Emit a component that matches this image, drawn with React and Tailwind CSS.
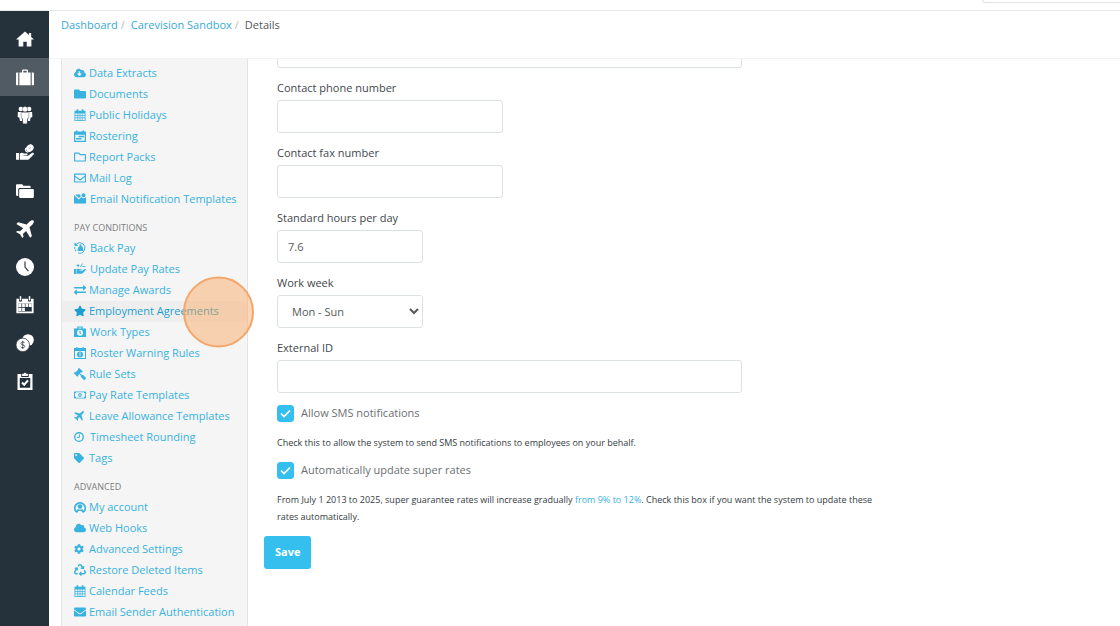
import React, { useState } from 'react';
import {
  FaCloudDownloadAlt, FaFolder, FaRegFolder, FaRegEnvelope,
  FaStar, FaGavel, FaTag, FaCloud, FaCog, FaRecycle, FaEnvelope,
  FaExchangeAlt, FaRegMoneyBillAlt,
} from 'react-icons/fa';

const svgProps = { viewBox: '0 0 24 24', fill: 'currentColor', 'aria-hidden': true };

const HomeIcon = (props) => (
  <svg {...svgProps} {...props}>
    <path d="M12 2L0 12.800h3.500V22h6.200v-6.500h4.600V22h6.200v-9.200H24l-3.800-3.500V4h-3v2.600z" />
  </svg>
);

const SuitcaseIcon = (props) => (
  <svg {...svgProps} {...props}>
    <path d="M0 7.500C0 6.600.6 6 1.500 6H3v17H1.500C.6 23 0 22.400 0 21.500zM21 6h1.500c.9 0 1.500.6 1.500 1.500v14c0 .9-.6 1.500-1.500 1.500H21z" />
    <path fillRule="evenodd" d="M4.500 6H8V3.200C8 2.500 8.500 2 9.200 2h5.600c.7 0 1.200.5 1.200 1.200V6h3.500v17h-15zM9.800 3.800V6h4.400V3.800z" />
  </svg>
);

const PlaneIcon = (props) => (
  <svg {...svgProps} {...props}>
    <path d="M23.300.7c1 1 .2 3.600-1 4.800L18 9.800l3.200 11.500-2.200 2.200-5.600-9-4.100 4.100.7 3.600L8.400 24l-3-4.900-5.400-3L1.700 14.500l3.700.6 4.200-4.200L.5 5.400 2.800 3.100 14.200 6l4.300-4.300C19.700.5 22.300-.3 23.300.7z" />
  </svg>
);

const PeopleIcon = (props) => (
  <svg {...svgProps} {...props}>
    <circle cx="6.500" cy="4" r="3" />
    <circle cx="17.500" cy="4" r="3" />
    <path d="M2.500 8H8v12H5.300L4.600 15.500 2.200 14.500z" />
    <path d="M21.500 8H16v12h2.700l.7-4.500 2.400-1z" />
    <g stroke="#25313b" strokeWidth=".5">
      <circle cx="12" cy="4.300" r="3.600" />
      <path d="M6.600 8.200h10.800l-.6 8-1.400.6-.6 7H9.200l-.6-7-1.400-.6z" />
    </g>
  </svg>
);

const HandCoinIcon = (props) => (
  <svg {...svgProps} {...props}>
    <path d="M0 12h4v9H0z" />
    <path d="M5 12.500c2-1.500 4.200-1.200 5.800.2h3.400c1.700 0 1.700 2.500 0 2.500H10v.9h5.500l5.600-4c1.800-1.100 3.700.7 2.200 2.300l-6 5.800c-.7.500-1.300.8-2.200.8H5z" />
    <ellipse cx="18.500" cy="5.500" rx="5.300" ry="4.400" transform="rotate(-40 18.500 5.500)" />
    <path d="M13 5.500c-1.500 2.500.5 5.500 3.500 5.300" fill="none" stroke="currentColor" strokeWidth="1.500" />
    <path d="M17.500 7l2-2.800" stroke="#25313b" strokeWidth=".5" />
  </svg>
);

const FoldersIcon = (props) => (
  <svg {...svgProps} {...props}>
    <path d="M0 4.500C0 3.700.6 3 1.500 3h6.300c.8 0 1.300.5 1.500 1.200L9.700 5H18c1 0 1.500.6 1.500 1.500V8H5C3.800 8 3 8.800 3 10v8.500H1.500C.6 18.500 0 18 0 17z" />
    <rect x="4.200" y="9.200" width="19.600" height="12" rx="1.600" />
  </svg>
);

const ClockIcon = (props) => (
  <svg {...svgProps} {...props}>
    <circle cx="12" cy="12" r="12" />
    <path d="M12 4.500V12l4.500 5.500" fill="none" stroke="#25313b" strokeWidth="1.500" />
  </svg>
);

const ScheduleIcon = (props) => (
  <svg {...svgProps} {...props}>
    <path fillRule="evenodd" d="M.5 3.500H4v2a2 2 0 0 0 4 0v-2h8v2a2 2 0 0 0 4 0v-2h3.500V23H.5zM3 10v10.500h18V10z" />
    <rect x="5" y="0" width="2" height="6" rx="1" />
    <rect x="17" y="0" width="2" height="6" rx="1" />
    <path d="M3 10h4.300v4.500H3zM8.200 10h3.600v4.500H8.200zM12.700 10h3.600v4.500h-3.600zM17.200 10H21v4.500h-3.800zM3 15.500h4.300V20H3zM8.200 15.500h3.600V20H8.200z" />
  </svg>
);

const CoinsIcon = (props) => (
  <svg {...svgProps} {...props}>
    <circle cx="16" cy="8" r="7.800" />
    <circle cx="9" cy="14.500" r="9" stroke="#25313b" strokeWidth="1" />
    <path d="M11.500 12c-.4-1-1.300-1.400-2.500-1.400-1.400 0-2.400.7-2.400 1.900 0 2.800 5 1.300 5 4 0 1.300-1.100 2-2.600 2-1.300 0-2.300-.5-2.700-1.600M9 9v11" fill="none" stroke="#25313b" strokeWidth="1" />
  </svg>
);

const ClipboardIcon = (props) => (
  <svg {...svgProps} {...props}>
    <path fillRule="evenodd" d="M2 2.500h5v4h10v-4h5V24H2zM5 8v13h14V8z" />
    <path d="M8.200 2.200h2.200a1.700 1.700 0 0 1 3.200 0h2.200v3H8.200z" />
    <path d="M8 14l3 3 5-5.800" fill="none" stroke="currentColor" strokeWidth="2.800" />
  </svg>
);

const CalendarIcon = (props) => (
  <svg {...svgProps} {...props}>
    <path fillRule="evenodd" d="M1 3.500h4V1.200C5 0 8.500 0 8.500 1.200v2.300h7V1.200c0-1.200 3.500-1.200 3.500 0v2.300h4V24H1zM2.700 9v3.200H7V9zm5.700 0v3.200h3V9zm4.300 0v3.200h3V9zM17 9v3.200h4.300V9zM2.700 13.600v3.400H7v-3.400zm5.700 0v3.400h3v-3.400zm4.300 0v3.400h3v-3.400zm4.300 0v3.400h4.300v-3.400zM2.700 18.500v3.800H7v-3.800zm5.700 0v3.800h3v-3.800zm4.300 0v3.800h3v-3.800zm4.300 0v3.800h4.300v-3.800z" />
  </svg>
);

const RosterIcon = (props) => (
  <svg {...svgProps} {...props}>
    <path fillRule="evenodd" d="M0 3h4V1h3v2h10V1h3v2h4v21H0zM2.500 9.500v12h19v-12z" />
    <path d="M9 11.500h11v2.800H9zM4 16h11v2.800H4z" />
  </svg>
);

const MailAlertIcon = (props) => (
  <svg {...svgProps} {...props}>
    <path d="M0 4l9.500 9 5.300-4.800C17 11 21 11 24 8.500V21H0z" />
    <path d="M2.500 3h10.300c-.2 1.500.1 2.700.8 3.700L9.500 10z" />
    <circle cx="19" cy="4.500" r="3.800" />
  </svg>
);

const BackPayIcon = (props) => (
  <svg {...svgProps} {...props}>
    <path d="M4.500 4A10.500 10.500 0 1 1 8 21.800" fill="none" stroke="currentColor" strokeWidth="2" />
    <path d="M1 .5V8h7.500zM0 10.500h2.500v3H0zM1 16l2.500-1 1.500 2.500L3 19z" />
    <path d="M10 5h5.500l-1.300 2.700c3.300 2 4.800 5.300 4.300 10.300h-11c-.5-5 1-8.300 4.300-10.300z" />
  </svg>
);

const UpdatePayIcon = (props) => (
  <svg {...svgProps} {...props}>
    <path d="M0 12h4.500v10H0zM5.500 12.500c2-1.300 4-1 5.500.2h3.500c1.600 0 1.600 2.500 0 2.500H11v1h5l5.400-4c1.800-1 3.500.8 2 2.300l-6 6c-.7.600-1.300 1-2.200 1H5.500z" />
    <path d="M5 5h6M8 2v6M12.500 8.500L17 1M16.500 7h6" fill="none" stroke="currentColor" strokeWidth="1.800" />
  </svg>
);

const WorkTypeIcon = (props) => (
  <svg {...svgProps} {...props}>
    <path fillRule="evenodd" d="M6.500 1h11v4H24v17H0V5h6.500zm2.500 2v2h6V3zm3 4.500a6 6 0 1 0 0 12 6 6 0 0 0 0-12z" />
    <path d="M12 9.500v4.300l2 1.500" fill="none" stroke="currentColor" strokeWidth="2.200" />
  </svg>
);

const RosterWarningIcon = (props) => (
  <svg {...svgProps} {...props}>
    <path fillRule="evenodd" d="M0 2h4.500V0H7v2h10V0h2.500v2H24v22H0zM2 8v14h20V8z" />
    <path fillRule="evenodd" d="M12 9a6 6 0 1 1 0 12 6 6 0 0 1 0-12zm-1 2v5h2v-5zm0 6v2h2v-2z" />
  </svg>
);

const AccountIcon = (props) => (
  <svg {...svgProps} {...props}>
    <path d="M5.500 22.500A10.500 10.500 0 1 1 18.500 22.500" fill="none" stroke="currentColor" strokeWidth="3.400" />
    <circle cx="12" cy="11" r="4.600" />
    <path d="M3.500 21.500c1-3 3-4.500 5.500-4.800 2 1 4 1 6 0 2.500.3 4.500 1.800 5.500 4.800L17 23.500c-.5-2.500-2-4-5-4s-4.500 1.500-5 4z" />
  </svg>
);

const RoundingIcon = (props) => (
  <svg {...svgProps} {...props}>
    <circle cx="12" cy="12" r="10.300" fill="none" stroke="currentColor" strokeWidth="3.200" />
    <path d="M13 6v7H7.500" fill="none" stroke="currentColor" strokeWidth="2.400" />
  </svg>
);

const railItems = [
  { name: 'Home', icon: HomeIcon },
  { name: 'Organisation', icon: SuitcaseIcon, active: true },
  { name: 'Employees', icon: PeopleIcon },
  { name: 'Payroll', icon: HandCoinIcon },
  { name: 'Files', icon: FoldersIcon },
  { name: 'Leave', icon: PlaneIcon },
  { name: 'Timesheets', icon: ClockIcon },
  { name: 'Roster', icon: ScheduleIcon },
  { name: 'Expenses', icon: CoinsIcon },
  { name: 'Tasks', icon: ClipboardIcon },
];

// wide: icons from the custom set sit a little further from their label
// small: narrow glyphs, drawn at 10px in the same 12px column
const menuGroups = [
  {
    items: [
      { label: 'Data Extracts', icon: FaCloudDownloadAlt },
      { label: 'Documents', icon: FaFolder },
      { label: 'Public Holidays', icon: CalendarIcon },
      { label: 'Rostering', icon: RosterIcon },
      { label: 'Report Packs', icon: FaRegFolder },
      { label: 'Mail Log', icon: FaRegEnvelope },
      { label: 'Email Notification Templates', icon: MailAlertIcon, wide: true },
    ],
  },
  {
    title: 'Pay Conditions',
    items: [
      { label: 'Back Pay', icon: BackPayIcon, wide: true },
      { label: 'Update Pay Rates', icon: UpdatePayIcon, wide: true },
      { label: 'Manage Awards', icon: FaExchangeAlt },
      { label: 'Employment Agreements', icon: FaStar, active: true },
      { label: 'Work Types', icon: WorkTypeIcon, wide: true },
      { label: 'Roster Warning Rules', icon: RosterWarningIcon, wide: true },
      { label: 'Rule Sets', icon: FaGavel, flip: true },
      { label: 'Pay Rate Templates', icon: FaRegMoneyBillAlt },
      { label: 'Leave Allowance Templates', icon: PlaneIcon, small: true },
      { label: 'Timesheet Rounding', icon: RoundingIcon, wide: true, small: true },
      { label: 'Tags', icon: FaTag, small: true },
    ],
  },
  {
    title: 'Advanced',
    items: [
      { label: 'My account', icon: AccountIcon },
      { label: 'Web Hooks', icon: FaCloud },
      { label: 'Advanced Settings', icon: FaCog, small: true },
      { label: 'Restore Deleted Items', icon: FaRecycle },
      { label: 'Calendar Feeds', icon: CalendarIcon },
      { label: 'Email Sender Authentication', icon: FaEnvelope },
    ],
  },
];

const inputClass = 'block h-[33px] rounded-[3px] border border-[#dce1e4] bg-white px-2.5 text-[11px] text-[#55595c] outline-none';

const Field = ({ id, label, children }) => (
  <div className="mb-3">
    <label htmlFor={id} className="mb-1 block text-[11px] leading-4 font-medium text-[#42474d]">{label}</label>
    {children}
  </div>
);

const CheckRow = ({ id, label, checked, onChange }) => (
  <div className="flex h-[17px] items-center gap-[7px]">
    <span className="grid size-[17px] shrink-0">
      <input
        id={id}
        type="checkbox"
        checked={checked}
        onChange={onChange}
        className="peer col-start-1 row-start-1 size-[17px] appearance-none rounded-[3px] border border-[#dce1e4] bg-white checked:border-[#34bfef] checked:bg-[#34bfef]"
      />
      <svg viewBox="0 0 17 17" className="pointer-events-none col-start-1 row-start-1 hidden size-[17px] peer-checked:block" aria-hidden="true">
        <path d="M4 8.500l3 3L13 5.500" fill="none" stroke="white" strokeWidth="1.700" />
      </svg>
    </span>
    <label htmlFor={id} className="text-[11px] text-[#6b6f73]">{label}</label>
  </div>
);

const Rail = () => (
  <nav aria-label="Main" className="flex w-[49px] shrink-0 flex-col bg-[#25313b] pt-[9px]">
    {railItems.map(({ name, icon: Icon, active }) => (
      <a
        key={name}
        href="#"
        aria-label={name}
        className={`flex h-[38px] items-center justify-center text-white ${active ? 'bg-[#515b63]' : ''}`}
      >
        <Icon className="size-[18px]" />
      </a>
    ))}
  </nav>
);

const SideMenu = () => (
  <aside className="w-[187px] shrink-0 border-x border-[#e4e4e4] bg-[#f5f5f5] pt-1">
    {menuGroups.map((group, i) => (
      <section key={i}>
        {group.title && (
          <h2 className="mt-2 px-3 pt-0.5 text-[9px] leading-4 font-medium text-[#7d7d7d] uppercase">{group.title}</h2>
        )}
        <ul className={group.title ? 'pt-0.5' : ''}>
          {group.items.map(({ label, icon: Icon, active, wide, small, flip }) => (
            <li key={label} className="relative">
              <a
                href="#"
                className={`flex h-[21px] items-center px-3 text-[11px] whitespace-nowrap ${wide ? 'gap-1' : 'gap-[3px]'} ${active ? 'bg-[#eeeeee] text-[#1b9fd0]' : 'text-[#38b2df]'}`}
              >
                <span className="w-3 shrink-0 pb-0.5">
                  <Icon className={`${small ? 'size-2.5' : 'size-3'} ${flip ? '-scale-x-100' : ''}`} />
                </span>
                {label}
              </a>
              {active && (
                <span className="pointer-events-none absolute top-1/2 -right-[7px] z-10 size-[71px] -translate-y-1/2 rounded-full border-2 border-[#f4a66a] bg-[#fba55a]/45" />
              )}
            </li>
          ))}
        </ul>
      </section>
    ))}
  </aside>
);

const DetailsForm = () => {
  const [form, setForm] = useState({ address: '', phone: '', fax: '', hours: '7.6', week: 'Mon - Sun', externalId: '' });
  const [sms, setSms] = useState(true);
  const [superRates, setSuperRates] = useState(true);

  const bind = (key) => ({
    id: key,
    value: form[key],
    onChange: (e) => setForm({ ...form, [key]: e.target.value }),
  });

  return (
    <form className="-mt-6 min-w-0 flex-1 px-4" onSubmit={(e) => e.preventDefault()}>
      <div className="max-w-[644px] px-[13px]">
        <input {...bind('address')} aria-label="Address" className={`${inputClass} mb-3 w-full max-w-[465px]`} />
        <Field id="phone" label="Contact phone number">
          <input {...bind('phone')} type="tel" className={`${inputClass} w-[226px]`} />
        </Field>
        <Field id="fax" label="Contact fax number">
          <input {...bind('fax')} type="tel" className={`${inputClass} w-[226px]`} />
        </Field>
        <Field id="hours" label="Standard hours per day">
          <input {...bind('hours')} className={`${inputClass} w-[146px]`} />
        </Field>
        <Field id="week" label="Work week">
          <select {...bind('week')} className={`${inputClass} w-[146px]`}>
            <option>Mon - Sun</option>
            <option>Sun - Sat</option>
          </select>
        </Field>
        <Field id="externalId" label="External ID">
          <input {...bind('externalId')} className={`${inputClass} w-full max-w-[465px]`} />
        </Field>

        <CheckRow id="sms" label="Allow SMS notifications" checked={sms} onChange={() => setSms(!sms)} />
        <p className="mt-3 mb-[11px] text-[9px] leading-[17px] text-[#333b42]">
          Check this to allow the system to send SMS notifications to employees on your behalf.
        </p>
        <CheckRow id="super" label="Automatically update super rates" checked={superRates} onChange={() => setSuperRates(!superRates)} />
        <p className="mt-3 mb-[11px] text-[9px] leading-[17px] text-[#333b42]">
          From July 1 2013 to 2025, super guarantee rates will increase gradually{' '}
          <a href="#" className="text-[#38b2df]">from 9% to 12%</a>. Check this box if you want the system to update these rates automatically.
        </p>
      </div>
      <button type="submit" className="h-[33px] rounded-[3px] bg-[#34bfef] px-[11px] text-[11px] font-bold text-white">Save</button>
    </form>
  );
};

const App = () => (
  <div className="flex h-screen flex-col overflow-hidden bg-white font-['Open_Sans',sans-serif]">
    <header className="flex h-[11px] shrink-0 justify-end overflow-hidden border-b border-[#e6e8e9]">
      <input
        type="search"
        aria-label="Search"
        className="-mt-[29px] h-8 w-[138px] rounded-bl-[4px] border border-r-0 border-[#dfe3e5] outline-none"
      />
    </header>

    <div className="flex min-h-0 flex-1">
      <Rail />
      <main className="flex min-w-0 flex-1 flex-col">
        <nav aria-label="Breadcrumb" className="h-12 shrink-0 border-b border-[#f2f3f3] px-3 pt-1.5">
          <ol className="flex gap-[3px] text-[11px] leading-4 text-[#55595c]">
            <li><a href="#" className="text-[#38a9d8]">Dashboard</a></li>
            <li className="text-[#b9bdc0]" aria-hidden="true">/</li>
            <li><a href="#" className="ml-[3px] text-[#38a9d8]">Carevision Sandbox</a></li>
            <li className="text-[#b9bdc0]" aria-hidden="true">/</li>
            <li className="ml-[3px]">Details</li>
          </ol>
        </nav>
        <div className="flex min-h-0 flex-1 overflow-hidden pl-3">
          <SideMenu />
          <DetailsForm />
        </div>
      </main>
    </div>
  </div>
);

export default App;
